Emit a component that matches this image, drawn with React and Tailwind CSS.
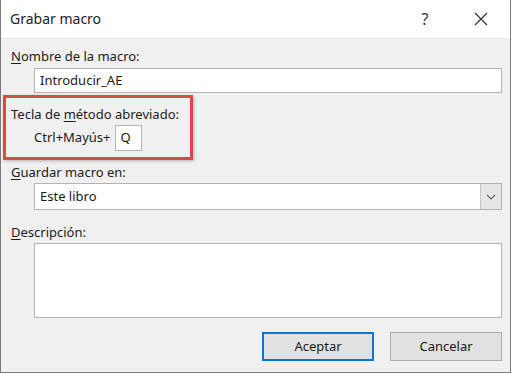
import React from "react";

const font = { fontFamily: '"Noto Sans", "Open Sans", sans-serif' };

function Label({ children }) {
  return <div className="text-[13px] leading-[18px] text-[#1a1a1a]">{children}</div>;
}

export default function App() {
  return (
    <div style={font} className="w-[512px] h-[373px] overflow-hidden bg-white">
      <div className="w-[511px] h-[373px] border-l border-r border-b border-[#7a7a7a] flex flex-col bg-[#f0f0f0]">
        <div className="h-[39px] bg-white flex items-center pl-[9px] border-b border-[#e8e8e8]">
          <div className="text-[14px] text-[#1a1a1a] leading-[20px] mt-[-1px]">Grabar macro</div>
          <div className="flex-1" />
          <div className="text-[16px] text-[#333] w-[20px] text-center mr-[38px]">?</div>
          <svg width="16" height="16" viewBox="0 0 16 16" className="mr-[21px]">
            <path d="M2 2 L14 14 M14 2 L2 14" stroke="#333" strokeWidth="1.2" fill="none" />
          </svg>
        </div>
        <div className="flex flex-col pl-[10px] pr-[8px]">
          <div className="mt-[8px]">
            <Label>
              <span className="underline underline-offset-2">N</span>ombre de la macro:
            </Label>
          </div>
          <div className="mt-[3px] ml-[23px] h-[25px] bg-white border border-[#b4b4b4] flex items-center pl-[5px] text-[13px] text-[#1a1a1a]">
            Introducir_AE
          </div>
          <div className="mt-[2px] ml-[-8px] w-[190px] border-[3px] border-[#d94b4b] shadow-[1px_1px_3px_rgba(0,0,0,0.25)] pl-[5px] pt-[7px] pb-[6px]">
            <Label>
              Tecla de <span className="underline underline-offset-2">m</span>étodo abreviado:
            </Label>
            <div className="mt-[2px] flex items-center ml-[23px]">
              <span className="text-[13px] text-[#1a1a1a]">Ctrl+Mayús+</span>
              <div className="ml-[5px] w-[27px] h-[26px] bg-white border border-[#b4b4b4] flex items-center pl-[4px] text-[13px] text-[#1a1a1a]">
                Q
              </div>
            </div>
          </div>
          <div className="mt-[3px]">
            <Label>
              <span className="underline underline-offset-2">G</span>uardar macro en:
            </Label>
          </div>
          <div className="mt-[2px] ml-[23px] h-[27px] bg-white border border-[#b4b4b4] flex items-stretch text-[13px] text-[#1a1a1a]">
            <div className="flex-1 flex items-center pl-[5px]">Este libro</div>
            <div className="w-[21px] bg-[#e6e6e6] border-l border-[#c8c8c8] flex items-center justify-center">
              <svg width="10" height="6" viewBox="0 0 10 6">
                <path d="M1 1 L5 5 L9 1" stroke="#666" strokeWidth="1.2" fill="none" />
              </svg>
            </div>
          </div>
          <div className="mt-[13px]">
            <Label>
              <span className="underline underline-offset-2">D</span>escripción:
            </Label>
          </div>
          <div className="mt-[2px] ml-[23px] h-[75px] bg-white border border-[#b4b4b4]" />
          <div className="mt-[14px] flex justify-end gap-[16px]">
            <div className="w-[112px] h-[29px] bg-[#e1e1e1] border-2 border-[#0078d7] flex items-center justify-center text-[13px] text-[#1a1a1a]">
              Aceptar
            </div>
            <div className="w-[112px] h-[29px] bg-[#e1e1e1] border border-[#adadad] flex items-center justify-center text-[13px] text-[#1a1a1a]">
              Cancelar
            </div>
          </div>
        </div>
      </div>
    </div>
  );
}
